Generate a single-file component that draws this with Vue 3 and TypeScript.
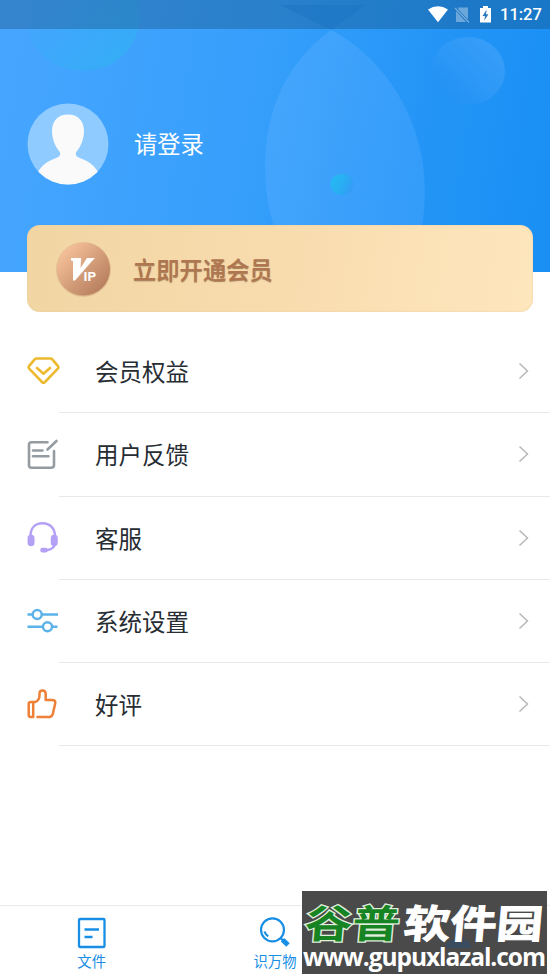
<script setup lang="ts">
interface MenuItem {
  id: string
  label: string
}

const menu: MenuItem[] = [
  { id: 'benefits', label: '会员权益' },
  { id: 'feedback', label: '用户反馈' },
  { id: 'service', label: '客服' },
  { id: 'settings', label: '系统设置' },
  { id: 'praise', label: '好评' },
]
</script>

<template>
  <main class="screen">
    <header class="hero">
      <svg class="hero-art" viewBox="0 0 550 272" aria-hidden="true">
        <defs>
          <linearGradient id="sky" x1="0" y1="0.46" x2="1" y2="0.54">
            <stop offset="0" stop-color="#46a5ff" />
            <stop offset="0.45" stop-color="#369ffb" />
            <stop offset="0.8" stop-color="#2294f6" />
            <stop offset="1" stop-color="#1a90f5" />
          </linearGradient>
          <linearGradient id="teal" x1="0.25" y1="0.4" x2="0.75" y2="1">
            <stop offset="0" stop-color="#2cb6ee" stop-opacity="0.08" />
            <stop offset="1" stop-color="#2cb6ee" stop-opacity="0.5" />
          </linearGradient>
          <linearGradient id="petal" x1="0" y1="0" x2="1" y2="0.4">
            <stop offset="0" stop-color="#55acff" stop-opacity="0.5" />
            <stop offset="1" stop-color="#55acff" stop-opacity="0.33" />
          </linearGradient>
          <linearGradient id="moon" x1="0.1" y1="0.8" x2="0.8" y2="0.2">
            <stop offset="0.1" stop-color="#2492f4" stop-opacity="0.6" />
            <stop offset="1" stop-color="#48a5fa" stop-opacity="0.55" />
          </linearGradient>
          <linearGradient id="dot" x1="0" y1="0.3" x2="1" y2="0.7">
            <stop offset="0" stop-color="#25b9f3" />
            <stop offset="0.5" stop-color="#29aef3" />
            <stop offset="1" stop-color="#3699f6" />
          </linearGradient>
        </defs>
        <rect width="550" height="272" fill="url(#sky)" />
        <ellipse cx="83" cy="16" rx="57" ry="55" fill="url(#teal)" />
        <path d="M280 5H365L331 30Z" fill="#1685e8" opacity=".35" />
        <path d="M331 30C282 65 265 118 265 165C265 194 269 213 277 235H420C425 216 426 188 423 165C414 103 377 54 331 30Z" fill="url(#petal)" />
        <ellipse cx="468" cy="71" rx="37" ry="34" fill="url(#moon)" />
        <ellipse cx="342" cy="184.500" rx="11.5" ry="10.5" fill="url(#dot)" />
      </svg>

      <div class="status">
        <svg width="68" height="20" viewBox="0 0 68 20" aria-hidden="true">
          <path d="M0 4.500Q10-2 20 4.500L10 17.300Z" fill="#fff" />
          <path d="M30 2.500H40V14.500L30.500 4.500M28 6V17H38Z" fill="#fff" opacity=".35" />
          <path d="M27 3L41 17.500" stroke="#a8c9e5" stroke-width="1.2" opacity=".65" />
          <path d="M52 3H55V1H60V3H63V17.500H52Z" fill="#fff" />
          <path d="M58.700 4.500L54.500 11H57L56.300 15.500L60.500 9.200H58Z" fill="#2b79bd" />
        </svg>
        <span class="time">11:27</span>
      </div>

      <div class="profile">
        <svg class="avatar" viewBox="0 0 82 82" aria-hidden="true">
          <defs><clipPath id="face"><circle cx="41" cy="41" r="40.5" /></clipPath></defs>
          <circle cx="41" cy="41" r="40.5" fill="#90cbff" />
          <path clip-path="url(#face)" d="M41 11.500C30 11.500 25 19 25 28C25 36 28.500 44 32 48C34.500 51 33 54 28 55.500C21 58 15 62 11 69V82H71V69C67 62 61 58 54 55.500C49 54 47.500 51 50 48C53.500 44 57 36 57 28C57 19 52 11.500 41 11.500Z" fill="#fafafa" />
        </svg>
        <span class="login">请登录</span>
      </div>
    </header>

    <section class="vip">
      <svg class="medal" viewBox="0 0 58 58" aria-hidden="true">
        <defs>
          <linearGradient id="copper" x1="0.15" y1="0.15" x2="0.85" y2="0.85">
            <stop offset="0" stop-color="#f3bf98" />
            <stop offset="1" stop-color="#b9805f" />
          </linearGradient>
        </defs>
        <circle cx="29.500" cy="29.500" r="27.300" fill="#c79c72" opacity=".5" />
        <circle cx="29.500" cy="29" r="26.500" fill="url(#copper)" />
        <path d="M17 18H27.200L26.500 28L33 18H41L38.500 20.500L21 40.500H19V21L17 20.500Z" fill="#fff" />
        <text x="29.500" y="41" class="ip" textLength="12.500" lengthAdjust="spacingAndGlyphs">IP</text>
      </svg>
      <span class="vip-label">立即开通会员</span>
    </section>

    <nav class="menu">
      <a v-for="item in menu" :key="item.id" class="row">
        <svg class="icon" viewBox="0 0 34 34" fill="none" aria-hidden="true">
          <g v-if="item.id === 'benefits'" stroke="#edb92e" stroke-width="2.600" stroke-linejoin="round" stroke-linecap="round">
            <path d="M9.500 3.500H23.500Q24.600 3.500 25.300 4.300L31 11.200Q31.900 12.500 30.800 13.700L18 27Q16.500 28.500 15 27L2.200 13.700Q1.100 12.500 2 11.200L7.700 4.300Q8.400 3.500 9.500 3.500Z" />
            <path d="M10 13L16.500 18.800L23 13" />
          </g>
          <g v-else-if="item.id === 'feedback'" stroke="#949ca2" stroke-width="2.600" stroke-linecap="round">
            <path d="M20.500 4.200H4.500Q2 4.200 2 7V27Q2 29.800 4.500 29.800H24Q27 29.800 27 27V13M6 12.500H15.500M6 18.300H21.500M20.500 11.500L29.500 3" />
          </g>
          <g v-else-if="item.id === 'service'" stroke="#b4a0f5" stroke-width="2.500" transform="translate(0 .8)">
            <path d="M3.500 16V14.500C3.500 6 8.500 1.500 15.500 1.500S28 6 28 14.500V22C27 26.500 23.500 28.200 19 28.500" />
            <rect x="1.800" y="14.200" width="4.500" height="9" rx="2.200" fill="#b4a0f5" />
            <rect x="25" y="14.200" width="4.500" height="9" rx="2.200" fill="#b4a0f5" />
            <rect x="14.500" y="27.200" width="5" height="2.200" rx="1" fill="#b4a0f5" />
          </g>
          <g v-else-if="item.id === 'settings'" stroke="#5cb3e9" stroke-width="2.500">
            <path d="M.500 9.500H5.500M14.500 9.500H31M.500 21.800H16M25 21.800H30.500" />
            <circle cx="10.200" cy="9.500" r="4.500" /><circle cx="20.500" cy="21.800" r="4.500" />
          </g>
          <g v-else stroke="#ee8038" stroke-width="2.500" stroke-linejoin="round" stroke-linecap="round" transform="translate(0 .5)">
            <path d="M6.200 13.500V28.500H4Q1.700 28.500 1.700 26.500V15.500Q1.700 13.500 4 13.500H8.500Q12.500 11.500 12.500 7V5Q12.500 2 15.500 2Q18.700 2 18.700 5.500V11.500H25Q29 11.500 28.200 15L25.800 25.500Q25 28.500 22 28.500H10.500" />
          </g>
        </svg>
        <div class="row-body">
          <span class="label">{{ item.label }}</span>
          <svg class="chevron" viewBox="0 0 12 18" fill="none" aria-hidden="true">
            <path d="M1.500 1.500L9.500 9L1.500 16.500" stroke="#b7b7b7" stroke-width="1.500" />
          </svg>
        </div>
      </a>
    </nav>

    <footer class="tabs">
      <a class="tab">
        <svg viewBox="0 0 32 32" fill="none" stroke="#188ee5" aria-hidden="true">
          <rect x="3" y="2" width="25.500" height="28" rx="1" stroke-width="2.300" />
          <path d="M8.500 12.500H23M8.500 20H16.500" stroke-width="2.400" />
        </svg>
        <span>文件</span>
      </a>
      <a class="tab">
        <svg viewBox="0 0 32 32" fill="none" stroke="#188ee5" aria-hidden="true">
          <circle cx="13.500" cy="12.800" r="11.500" stroke-width="2.200" />
          <path d="M5.500 14.500Q6.500 17.800 9.300 19.200M21.500 21L24.500 24" stroke-width="2.200" />
          <path d="M23.500 22.800L29 28" stroke-width="5" />
        </svg>
        <span>识万物</span>
      </a>
      <a class="tab"></a>
    </footer>

    <aside class="watermark">
      <svg viewBox="0 0 245 83" aria-hidden="true">
        <path d="M144 57Q144 49 152 49H155V38Q160 41 163 49Q169 50 169 57Z" fill="#3c4c60" />
        <g transform="skewX(-5)" class="brand">
          <text x="6" y="47.500" textLength="95" lengthAdjust="spacingAndGlyphs" class="green">谷普</text>
          <text x="105" y="47.500" textLength="139" lengthAdjust="spacingAndGlyphs" class="white">软件园</text>
        </g>
        <text x="1" y="75" textLength="243" lengthAdjust="spacing" class="site">www.gupuxlazal.com</text>
      </svg>
    </aside>
  </main>
</template>

<style>
body {
  background: #fff;
}
</style>

<style scoped>
.screen {
  position: relative;
  display: flex;
  flex-direction: column;
  width: 550px;
  height: 978px;
  overflow: hidden;
  background: #fff;
  font-family: Roboto, "Noto Sans CJK SC", sans-serif;
}
.hero {
  position: relative;
  flex: none;
  height: 272px;
}
.hero-art {
  position: absolute;
  inset: 0;
  width: 100%;
  height: 100%;
}
.status {
  position: relative;
  display: flex;
  align-items: center;
  justify-content: flex-end;
  gap: 4px;
  height: 29px;
  box-sizing: border-box;
  padding-right: 9px;
  background: rgba(22, 75, 120, 0.36);
}
.status svg {
  flex: none;
}
.time {
  color: #fff;
  font-size: 16.5px;
  font-weight: 500;
  line-height: 30px;
  width: 41px;
  white-space: nowrap;
}
.profile {
  position: relative;
  display: flex;
  align-items: center;
  gap: 26px;
  padding: 73.500px 0 0 27px;
}
.avatar {
  width: 82px;
  height: 82px;
}
.login {
  padding-bottom: 2px;
  color: #fff;
  font-size: 23.3px;
  margin-left: -1px;
}
.vip {
  position: relative;
  display: flex;
  flex: none;
  align-items: center;
  gap: 21px;
  box-sizing: border-box;
  height: 87px;
  margin: -47px 17px 0 27px;
  padding-left: 27px;
  border-radius: 13px;
  background: linear-gradient(100deg, #f1d5a3, #f8dcae 50%, #fee6bd);
  box-shadow: inset 0 0 2px #e8cf9e;
}
.medal {
  width: 58px;
  height: 58px;
}
.ip {
  fill: #fff;
  font-size: 13px;
  font-weight: 700;
}
.vip-label {
  color: #b0764f;
  font-size: 23.3px;
  font-weight: 500;
  text-shadow: 0 1px 1px rgba(111, 69, 41, 0.6);
}
.menu {
  flex: none;
  margin-top: 18px;
}
.row {
  display: flex;
  height: 83.3px;
  align-items: center;
  padding-left: 27px;
}
.icon {
  flex: none;
  width: 34px;
  height: 34px;
}
.row-body {
  display: flex;
  flex: 1;
  align-items: center;
  justify-content: space-between;
  box-sizing: border-box;
  height: 100%;
  margin-left: -2px;
  padding: 0 20px 0 36px;
  border-bottom: 1px solid #e9e9e9;
}
.label {
  color: #272d33;
  font-size: 23.5px;
}
.chevron {
  width: 12px;
  height: 18px;
}
.tabs {
  display: flex;
  box-sizing: border-box;
  height: 73px;
  margin-top: auto;
  border-top: 1px solid #ebebeb;
}
.tab {
  display: flex;
  flex: 1;
  flex-direction: column;
  align-items: center;
  padding-top: 11px;
  color: #188ee5;
  font-size: 14.3px;
  line-height: 20px;
}
.tab svg {
  width: 32px;
  height: 32px;
  margin-bottom: 3px;
}
.watermark {
  position: absolute;
  left: 302px;
  top: 891px;
  width: 245px;
  height: 83px;
  background: #4a4a4a;
}
.watermark svg {
  display: block;
  width: 100%;
  height: 100%;
}
.brand {
  font-family: "Noto Sans CJK SC", sans-serif;
  font-size: 39px;
  font-weight: 700;
  paint-order: stroke;
}
.green {
  fill: #178423;
  stroke: #e0f0dd;
  stroke-width: 2.500px;
}
.white {
  fill: #fff;
  stroke: #fff;
  stroke-width: 1px;
}
.site {
  fill: #fff;
  font-family: "Open Sans", "Noto Sans", sans-serif;
  font-size: 24.5px;
  font-weight: 700;
}
</style>
